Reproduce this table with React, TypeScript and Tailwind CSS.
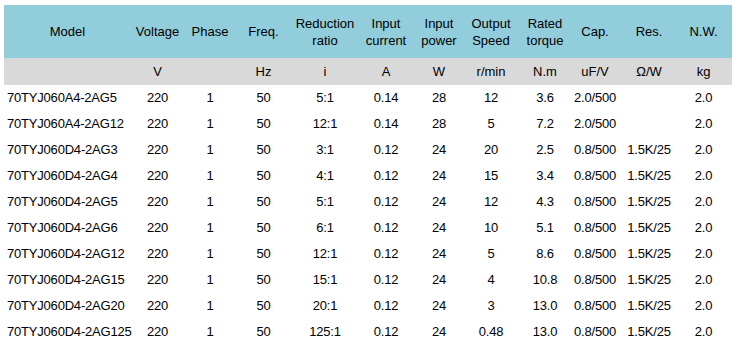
import React from "react";

const cols =
  "grid grid-cols-[127px_53px_52px_55px_68px_54px_52px_52px_56px_44px_64px_51px]";

const headers: string[][] = [
  ["Model"],
  ["Voltage"],
  ["Phase"],
  ["Freq."],
  ["Reduction", "ratio"],
  ["Input", "current"],
  ["Input", "power"],
  ["Output", "Speed"],
  ["Rated", "torque"],
  ["Cap."],
  ["Res."],
  ["N.W."],
];

const units = ["", "V", "", "Hz", "i", "A", "W", "r/min", "N.m", "uF/V", "Ω/W", "kg"];

const rows: string[][] = [
  ["70TYJ060A4-2AG5", "220", "1", "50", "5:1", "0.14", "28", "12", "3.6", "2.0/500", "", "2.0"],
  ["70TYJ060A4-2AG12", "220", "1", "50", "12:1", "0.14", "28", "5", "7.2", "2.0/500", "", "2.0"],
  ["70TYJ060D4-2AG3", "220", "1", "50", "3:1", "0.12", "24", "20", "2.5", "0.8/500", "1.5K/25", "2.0"],
  ["70TYJ060D4-2AG4", "220", "1", "50", "4:1", "0.12", "24", "15", "3.4", "0.8/500", "1.5K/25", "2.0"],
  ["70TYJ060D4-2AG5", "220", "1", "50", "5:1", "0.12", "24", "12", "4.3", "0.8/500", "1.5K/25", "2.0"],
  ["70TYJ060D4-2AG6", "220", "1", "50", "6:1", "0.12", "24", "10", "5.1", "0.8/500", "1.5K/25", "2.0"],
  ["70TYJ060D4-2AG12", "220", "1", "50", "12:1", "0.12", "24", "5", "8.6", "0.8/500", "1.5K/25", "2.0"],
  ["70TYJ060D4-2AG15", "220", "1", "50", "15:1", "0.12", "24", "4", "10.8", "0.8/500", "1.5K/25", "2.0"],
  ["70TYJ060D4-2AG20", "220", "1", "50", "20:1", "0.12", "24", "3", "13.0", "0.8/500", "1.5K/25", "2.0"],
  ["70TYJ060D4-2AG125", "220", "1", "50", "125:1", "0.12", "24", "0.48", "13.0", "0.8/500", "1.5K/25", "2.0"],
];

export default function App() {
  return (
    <div className="w-[737px] h-[349px] bg-white pt-[5px] pl-[4px] text-[13px] text-black font-['Liberation_Sans',Arial,sans-serif]">
      <div className="w-[728px]">
        <div className={`${cols} h-[53px] bg-[#92cddc]`}>
          {headers.map((h, i) => (
            <div
              key={i}
              className={`flex flex-col items-center justify-center leading-[17px] whitespace-nowrap ${i === 11 ? "pr-[6px]" : ""}`}
            >
              {h.map((l, j) => (
                <span key={j}>{l}</span>
              ))}
            </div>
          ))}
        </div>
        <div className={`${cols} h-[27px] bg-[#d9d9d9]`}>
          {units.map((u, i) => (
            <div
              key={i}
              className={`flex items-center justify-center whitespace-nowrap ${i === 11 ? "pr-[6px]" : ""}`}
            >
              {u}
            </div>
          ))}
        </div>
        {rows.map((r, ri) => (
          <div key={ri} className={`${cols} h-[26px] tracking-[-0.2px]`}>
            {r.map((c, i) => (
              <div
                key={i}
                className={`flex items-center whitespace-nowrap ${
                  i === 0 ? "justify-start pl-[3px]" : "justify-center"
                } ${i === 11 ? "pr-[6px]" : ""}`}
              >
                {c}
              </div>
            ))}
          </div>
        ))}
      </div>
    </div>
  );
}
